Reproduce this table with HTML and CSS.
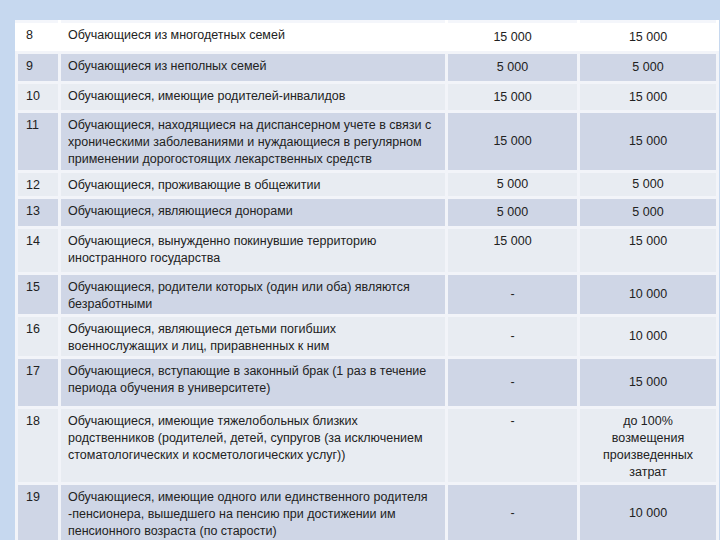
FILE: index.html
```
<!DOCTYPE html>
<html lang="ru">
<head>
<meta charset="utf-8">
<link rel="stylesheet" href="styles.css">
</head>
<body>
<div class="page">
<table class="grid">
<colgroup><col class="c1"><col class="c2"><col class="c3"><col class="c4"></colgroup>
<tr class="r-white h30"><td>8</td><td>Обучающиеся из многодетных семей</td><td class="num">15 000</td><td class="num">15 000</td></tr>
<tr class="r-dark h29"><td>9</td><td>Обучающиеся из неполных семей</td><td class="num">5 000</td><td class="num">5 000</td></tr>
<tr class="r-light h28"><td>10</td><td>Обучающиеся, имеющие родителей-инвалидов</td><td class="num">15 000</td><td class="num">15 000</td></tr>
<tr class="r-dark h60"><td>11</td><td>Обучающиеся, находящиеся на диспансерном учете в связи с хроническими заболеваниями и нуждающиеся в регулярном применении дорогостоящих лекарственных средств</td><td class="num">15 000</td><td class="num">15 000</td></tr>
<tr class="r-light h25"><td>12</td><td>Обучающиеся, проживающие в общежитии</td><td class="num">5 000</td><td class="num">5 000</td></tr>
<tr class="r-dark h29"><td>13</td><td>Обучающиеся, являющиеся донорами</td><td class="num">5 000</td><td class="num">5 000</td></tr>
<tr class="r-light h47"><td>14</td><td>Обучающиеся, вынужденно покинувшие территорию иностранного государства</td><td class="num top">15 000</td><td class="num top">15 000</td></tr>
<tr class="r-dark h43"><td>15</td><td>Обучающиеся, родители которых (один или оба) являются безработными</td><td class="num">-</td><td class="num">10 000</td></tr>
<tr class="r-light h43"><td>16</td><td>Обучающиеся, являющиеся детьми погибших<br>военнослужащих и лиц, приравненных к ним</td><td class="num">-</td><td class="num">10 000</td></tr>
<tr class="r-dark h50"><td>17</td><td>Обучающиеся, вступающие в законный брак (1 раз в течение периода обучения в университете)</td><td class="num">-</td><td class="num">15 000</td></tr>
<tr class="r-light h76"><td>18</td><td>Обучающиеся, имеющие тяжелобольных близких родственников (родителей, детей, супругов (за исключением стоматологических и косметологических услуг))</td><td class="num top">-</td><td class="num top"><span class="narrow">до 100% возмещения произведенных затрат</span></td></tr>
<tr class="r-dark h60"><td>19</td><td>Обучающиеся, имеющие одного или единственного родителя -пенсионера, вышедшего на пенсию при достижении им пенсионного возраста (по старости)</td><td class="num">-</td><td class="num">10 000</td></tr>
</table>
</div>
</body>
</html>
```

FILE: styles.css
```
html, body {
  margin: 0;
  padding: 0;
  background: #c6d8ef;
  overflow: hidden;
}
.page {
  width: 720px;
  height: 540px;
  padding: 20px 0 0 15px;
  box-sizing: border-box;
  overflow: hidden;
}
.grid {
  border-collapse: collapse;
  table-layout: fixed;
  width: 701px;
  font-family: "Liberation Sans", Arial, sans-serif;
  font-size: 12.5px;
  line-height: 17px;
  color: #222222;
}
.c1 { width: 43px; }
.c2 { width: 387px; }
.c3 { width: 132px; }
.c4 { width: 139px; }
.grid td {
  border: 3px solid #f2f4f9;
  padding: 4px 6px 0 7px;
  vertical-align: top;
  box-sizing: border-box;
}
.grid td:first-child { padding-left: 8px; }
.grid td.num {
  text-align: center;
  vertical-align: middle;
  padding: 0 6px;
}
.grid td.num.top { vertical-align: top; padding-top: 4px; }
.narrow { display: block; width: 100px; margin: 0 auto; }
.r-white td { background: #ffffff; border-left-color: #ffffff; border-right-color: #ffffff; border-top-color: #f4f6fb; }
.r-dark td { background: #cfd6e6; }
.r-light td { background: #e8ecf2; }
.h25 { height: 26px; }
.h28 { height: 29px; }
.h29 { height: 30px; }
.h30 { height: 31px; }
.h43 { height: 42px; }
.h47 { height: 46px; }
.h50 { height: 50px; }
.h60 { height: 60px; }
.h76 { height: 76px; }
```
